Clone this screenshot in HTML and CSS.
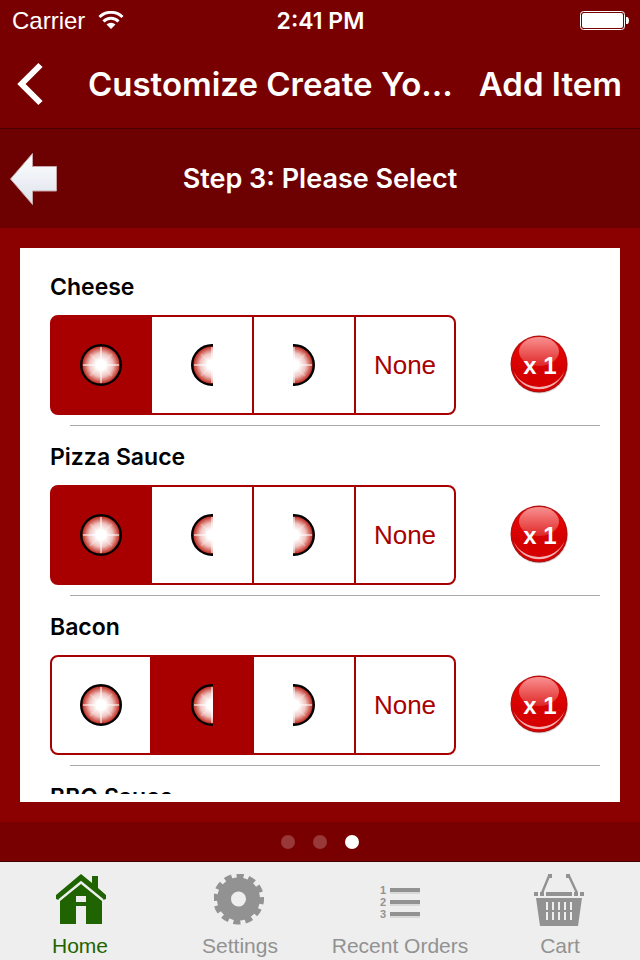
FILE: index.html
```html
<!DOCTYPE html>
<html lang="en">
<head>
  <meta charset="UTF-8" />
  <meta name="viewport" content="width=device-width, initial-scale=1.0" />
  <title>Customize Create Your Own</title>
  <link rel="stylesheet" href="styles.css">
</head>
<body>
  <!-- shared shapes -->
  <svg class="defs" width="0" height="0" aria-hidden="true">
    <defs>
      <radialGradient id="pizzaFill">
        <stop offset="0.25" stop-color="#fff" />
        <stop offset="0.6" stop-color="#f0c4c0" />
        <stop offset="1" stop-color="#b8180c" />
      </radialGradient>
      <linearGradient id="arrowFill" x1="0" y1="0" x2="0" y2="1">
        <stop offset="0" stop-color="#fff" />
        <stop offset="1" stop-color="#dce2ec" />
      </linearGradient>
      <linearGradient id="ballFill" x1="0" y1="0" x2="0" y2="1">
        <stop offset="0" stop-color="#f00808" />
        <stop offset="0.6" stop-color="#d40000" />
        <stop offset="1" stop-color="#d80000" />
      </linearGradient>
      <linearGradient id="ballShine" x1="0" y1="0" x2="0" y2="1">
        <stop offset="0" stop-color="#fff" stop-opacity="0.55" />
        <stop offset="1" stop-color="#fff" stop-opacity="0.15" />
      </linearGradient>
      <symbol id="pizza" viewBox="0 0 42 42">
        <circle cx="21" cy="21" r="19.5" fill="url(#pizzaFill)" />
        <g stroke="#fff" stroke-width="2" opacity="0.55">
          <path d="M21 3V39M3 21H39" />
          <path d="M10 10L32 32M32 10L10 32" opacity="0.4" />
        </g>
        <circle cx="21" cy="21" r="19.8" fill="none" stroke="#000" stroke-width="2.4" />
      </symbol>
      <symbol id="ball" viewBox="0 0 60 60">
        <circle cx="29.500" cy="30" r="28.5" fill="#999" opacity="0.4" />
        <circle cx="29" cy="29" r="28.5" fill="#b01010" />
        <circle cx="29" cy="29" r="27.3" fill="url(#ballFill)" />
        <path d="M3.500 36A27 27 0 0 0 54.500 36A27.500 25.500 0 0 1 3.500 36Z" fill="#fff" opacity="0.7" />
        <ellipse cx="29" cy="16.500" rx="20" ry="14.500" fill="url(#ballShine)" />
      </symbol>
    </defs>
  </svg>

  <div class="app">
    <header class="header">
      <div class="status">
        <div class="carrier">
          <span>Carrier</span>
          <svg width="26" height="20" viewBox="0 0 26 20" fill="none" stroke="#fff">
            <path d="M1.500 6A16.500 16.500 0 0 1 24.500 6" stroke-width="3" />
            <path d="M5.500 10.500A10.500 10.500 0 0 1 20.500 10.500" stroke-width="3" />
            <path d="M8.500 13.500A6.400 6.400 0 0 1 17.500 13.500L13 18Z" fill="#fff" stroke="none" />
          </svg>
        </div>
        <span class="time">2:41 PM</span>
        <svg class="battery" width="49" height="20" viewBox="0 0 49 20">
          <rect x="0.500" y="0.500" width="44" height="18" rx="3" fill="none" stroke="#fff" />
          <rect x="2" y="2" width="41" height="15" rx="2" fill="#fff" />
          <path d="M46 6H47.500Q49 6.500 49 9.500Q49 12.500 47.500 13H46Z" fill="#fff" />
        </svg>
      </div>
      <div class="nav">
        <button type="button" class="plain back" aria-label="Back">
          <svg width="28" height="44" viewBox="0 0 28 44">
            <path d="M24.500 3L5.500 22L24.500 41" fill="none" stroke="#fff" stroke-width="6" />
          </svg>
        </button>
        <h1>Customize Create Yo…</h1>
        <button type="button" class="plain add">Add Item</button>
      </div>
    </header>

    <div class="step">
      <button type="button" class="plain prev" aria-label="Previous step">
        <svg width="48" height="52" viewBox="0 0 48 52">
          <path d="M0.500 26L22.500 0.500V13.500H46.500V38H22.500V51.500Z" fill="url(#arrowFill)" stroke="#c9a4a8" stroke-width="1" />
        </svg>
      </button>
      <h2>Step 3: Please Select</h2>
    </div>

    <main class="content">
      <div class="card">
        <form class="list">
          <fieldset class="topping">
            <legend>Cheese</legend>
            <div class="row">
              <div class="segments">
                <label><input type="radio" name="cheese" aria-label="Whole" checked><svg width="42" height="42"><use href="#pizza" /></svg></label>
                <label><input type="radio" name="cheese" aria-label="Left half"><svg width="22" height="42"><use href="#pizza" width="42" height="42" /></svg></label>
                <label><input type="radio" name="cheese" aria-label="Right half"><svg width="22" height="42"><use href="#pizza" x="-20" width="42" height="42" /></svg></label>
                <label><input type="radio" name="cheese"><span>None</span></label>
              </div>
              <button type="button" class="plain count"><svg width="60" height="60"><use href="#ball" /></svg><span>x 1</span></button>
            </div>
          </fieldset>

          <fieldset class="topping">
            <legend>Pizza Sauce</legend>
            <div class="row">
              <div class="segments">
                <label><input type="radio" name="sauce" aria-label="Whole" checked><svg width="42" height="42"><use href="#pizza" /></svg></label>
                <label><input type="radio" name="sauce" aria-label="Left half"><svg width="22" height="42"><use href="#pizza" width="42" height="42" /></svg></label>
                <label><input type="radio" name="sauce" aria-label="Right half"><svg width="22" height="42"><use href="#pizza" x="-20" width="42" height="42" /></svg></label>
                <label><input type="radio" name="sauce"><span>None</span></label>
              </div>
              <button type="button" class="plain count"><svg width="60" height="60"><use href="#ball" /></svg><span>x 1</span></button>
            </div>
          </fieldset>

          <fieldset class="topping">
            <legend>Bacon</legend>
            <div class="row">
              <div class="segments">
                <label><input type="radio" name="bacon" aria-label="Whole"><svg width="42" height="42"><use href="#pizza" /></svg></label>
                <label><input type="radio" name="bacon" aria-label="Left half" checked><svg width="22" height="42"><use href="#pizza" width="42" height="42" /></svg></label>
                <label><input type="radio" name="bacon" aria-label="Right half"><svg width="22" height="42"><use href="#pizza" x="-20" width="42" height="42" /></svg></label>
                <label><input type="radio" name="bacon"><span>None</span></label>
              </div>
              <button type="button" class="plain count"><svg width="60" height="60"><use href="#ball" /></svg><span>x 1</span></button>
            </div>
          </fieldset>

          <fieldset class="topping">
            <legend>BBQ Sauce</legend>
          </fieldset>
        </form>
      </div>
    </main>

    <div class="pager">
      <span class="dot"></span>
      <span class="dot"></span>
      <span class="dot active"></span>
    </div>

    <nav class="tabs">
      <a href="#" class="active">
        <svg width="52" height="54" viewBox="0 0 52 54">
          <path d="M27 10L48 27V50H32V32H22V50H6V27Z" fill="#1f6400" />
          <path d="M27 0L38 9V2H44V14L52 21V25L49 26L27 8L5 26L2 25V21Z" fill="#1f6400" />
          <path d="M5 26L27 8L49 26" fill="none" stroke="#eee" stroke-width="2" />
          <path d="M22 22H32V28H22Z" fill="#eee" />
        </svg>
        <span>Home</span>
      </a>
      <a href="#">
        <svg width="52" height="54" viewBox="0 0 52 54">
          <g fill="none" stroke="#929292" transform="rotate(-86 24.500 25)">
            <circle cx="24.500" cy="25" r="14.500" stroke-width="14" />
            <circle cx="24.500" cy="25" r="23" stroke-width="5" pathLength="120" stroke-dasharray="6 4" stroke-dashoffset="3" />
          </g>
        </svg>
        <span>Settings</span>
      </a>
      <a href="#">
        <svg width="52" height="54" viewBox="0 0 52 54">
          <g fill="#929292" font-family="Liberation Sans, Arial, sans-serif" font-size="11" font-weight="bold">
            <text x="6" y="20">1</text>
            <text x="6" y="32">2</text>
            <text x="6" y="44">3</text>
          </g>
          <path d="M16 18H46V20H16ZM16 30H46V32H16ZM16 42H46V44H16Z" fill="#d8d8d8" />
          <path d="M16 14H46V18H16ZM16 26H46V30H16ZM16 38H46V42H16Z" fill="#929292" />
        </svg>
        <span>Recent Orders</span>
      </a>
      <a href="#">
        <svg width="52" height="54" viewBox="0 0 52 54">
          <path d="M15 2L8 19M35 2L43 19" stroke="#929292" stroke-width="2.400" />
          <path d="M14 0H18V4H14ZM32 0H36V4H32ZM0 18H4V22H0ZM6 18H10V22H6ZM12 18H38V22H12ZM40 18H44V22H40ZM46 18H50V22H46Z" fill="#929292" />
          <path d="M2 24H48L44 52H6Z" fill="#929292" />
          <path d="M13 28V36M19 28V36M25 28V36M31 28V36M37 28V36M13 38V46M19 38V46M25 38V46M31 38V46M37 38V46" stroke="#eee" stroke-width="2" />
        </svg>
        <span>Cart</span>
      </a>
    </nav>
  </div>
</body>
</html>
```
FILE: styles.css
```css
* {
  box-sizing: border-box;
}
body {
  margin: 0;
  font-family: "Liberation Sans", Arial, sans-serif;
  color: #000;
  background: #8b0000;
}
h1, h2, legend, .add, .time {
  font-family: Inter, "Liberation Sans", sans-serif;
  font-weight: 600;
}
svg {
  display: block;
}
.defs {
  position: absolute;
}
.plain {
  border: none;
  background: none;
  padding: 0;
  color: #fff;
  cursor: pointer;
}
.app {
  display: flex;
  flex-direction: column;
  height: 100vh;
}

/* status bar + title */
.header {
  background: #780000;
  color: #fff;
  border-bottom: 1px solid #460000;
}
.status {
  display: grid;
  grid-template-columns: 1fr auto 1fr;
  align-items: center;
  height: 40px;
  padding: 2px 11px 0 12px;
  font-size: 24px;
}
.carrier {
  display: flex;
  align-items: center;
  gap: 13px;
}
.time {
  font-size: 23px;
}
.battery {
  justify-self: end;
}
.nav {
  display: flex;
  align-items: center;
  height: 88px;
  padding: 0 18px 0 16px;
}
.nav h1 {
  flex: 1;
  margin: 0;
  padding-left: 18px;
  font-size: 33px;
  text-align: center;
  white-space: nowrap;
}
.add {
  font-size: 33px;
}

.step {
  display: grid;
  grid-template-columns: 48px 1fr 48px;
  align-items: center;
  height: 99px;
  padding: 0 10px;
  background: #6d0000;
  color: #fff;
}
.step h2 {
  margin: 0;
  font-size: 27px;
  text-align: center;
}

/* topping list */
.content {
  flex: 1;
  min-height: 0;
  padding: 20px;
}
.card {
  height: 100%;
  padding: 8px 0;
  background: #fff;
}
.list {
  height: 100%;
  overflow: hidden;
}
.topping {
  position: relative;
  height: 170px;
  margin: 0;
  padding: 16px 50px 0 30px;
  border: none;
}
.topping::after {
  content: "";
  position: absolute;
  left: 50px;
  right: 20px;
  bottom: 0;
  height: 1px;
  background: #aaa;
}
.topping legend {
  float: left;
  width: 100%;
  padding: 0;
  margin-bottom: 13px;
  font-size: 23px;
  line-height: 30px;
}
.row {
  clear: both;
  display: flex;
  align-items: center;
  gap: 54px;
}
.segments {
  flex: 1;
  display: flex;
  height: 100px;
}
.segments label {
  flex: 104;
  display: flex;
  align-items: center;
  justify-content: center;
  border: 2px solid #a80000;
  color: #a80000;
  font-size: 26px;
  cursor: pointer;
}
.segments label + label {
  margin-left: -2px;
}
.segments label:first-child {
  flex: 102;
  border-radius: 8px 0 0 8px;
}
.segments label:last-child {
  flex: 102;
  border-radius: 0 8px 8px 0;
}
.segments label:has(input:checked) {
  background: #a80000;
  color: #fff;
}
.segments input {
  position: absolute;
  opacity: 0;
  pointer-events: none;
}
.count {
  display: grid;
  width: 60px;
  height: 60px;
  font-family: "Liberation Sans", Arial, sans-serif;
  font-size: 24px;
  font-weight: bold;
}
.count svg, .count span {
  grid-area: 1 / 1;
}
.count span {
  line-height: 62px;
}

.pager {
  display: flex;
  align-items: center;
  justify-content: center;
  gap: 18px;
  height: 40px;
  background: #780000;
  border-bottom: 1px solid #460000;
}
.dot {
  width: 14px;
  height: 14px;
  border-radius: 50%;
  background: #983838;
}
.dot.active {
  background: #fff;
}

/* bottom tabs */
.tabs {
  display: grid;
  grid-template-columns: repeat(4, 1fr);
  height: 98px;
  padding-top: 12px;
  background: #eee;
}
.tabs a {
  display: flex;
  flex-direction: column;
  align-items: center;
  gap: 6px;
  color: #929292;
  font-size: 21px;
  line-height: 24px;
  text-decoration: none;
}
.tabs a.active {
  color: #1f6400;
}
```
